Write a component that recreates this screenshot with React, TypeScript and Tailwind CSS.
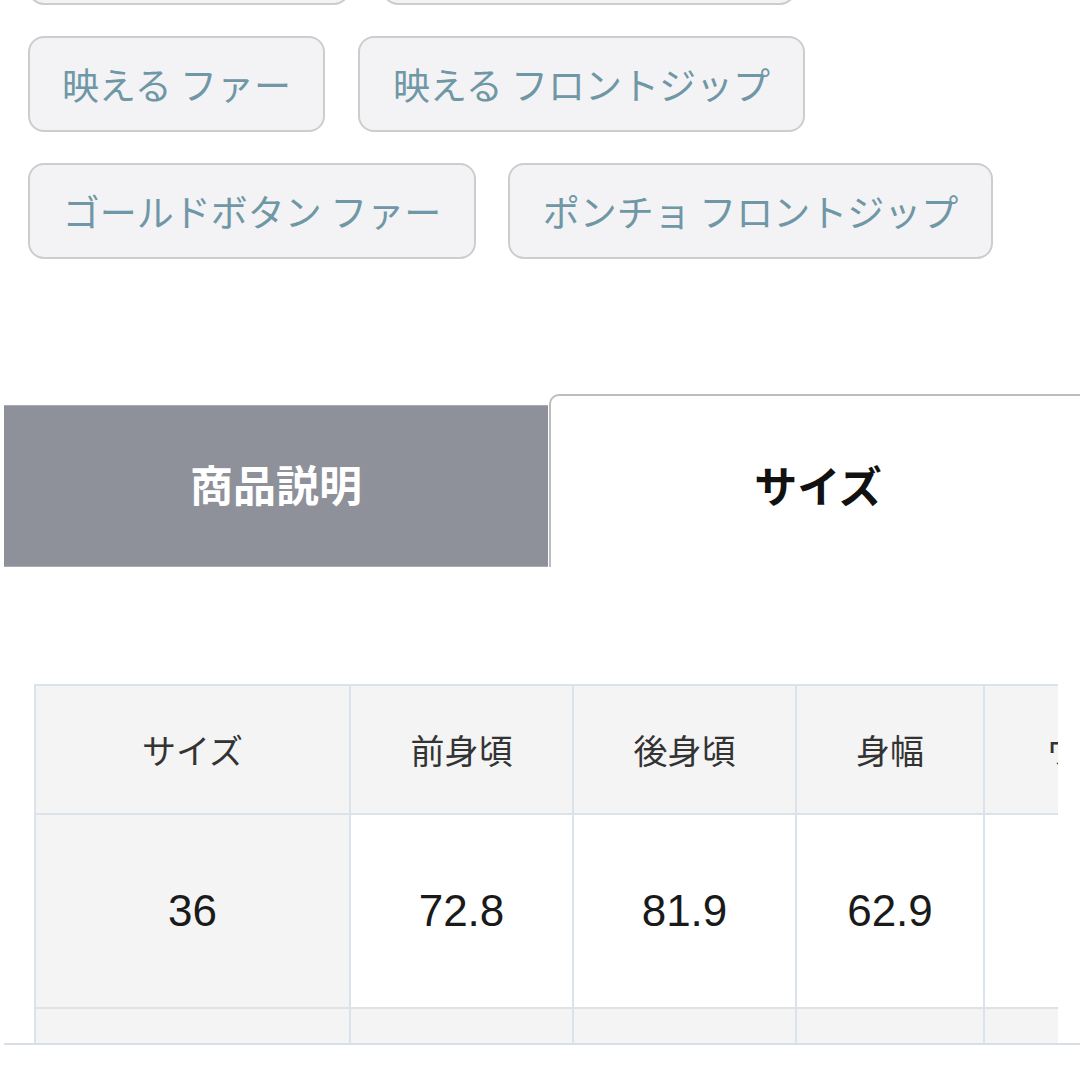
import React from "react";

const jp = { fontFamily: '"Noto Sans CJK JP", "Noto Sans", sans-serif' } as React.CSSProperties;

function Chip({ label, w }: { label?: string; w: string }) {
  return (
    <div
      className={`h-[96px] ${w} shrink-0 flex items-center justify-center rounded-[16px] border-2 border-[#cdcdcd] bg-[#f3f3f5] text-[37px] text-[#6f97a5] whitespace-nowrap leading-none`}
    >
      {label}
    </div>
  );
}

export default function App() {
  const head = ["サイズ", "前身頃", "後身頃", "身幅", "ウエスト"];
  const rows = [
    ["36", "72.8", "81.9", "62.9", "60.0"],
    ["38", "73.8", "82.9", "64.9", "62.0"],
  ];
  return (
    <div className="w-[1080px] h-[1080px] overflow-hidden bg-white" style={jp}>
      <div className="flex flex-col gap-[31px] pl-[28px] -mt-[91px]">
        <div className="flex gap-[32px]">
          <Chip w="w-[322px]" />
          <Chip w="w-[414px]" />
        </div>
        <div className="flex gap-[33px]">
          <Chip label="映える ファー" w="w-[297px]" />
          <Chip label="映える フロントジップ" w="w-[447px]" />
        </div>
        <div className="flex gap-[32px]">
          <Chip label="ゴールドボタン ファー" w="w-[448px]" />
          <Chip label="ポンチョ フロントジップ" w="w-[485px]" />
        </div>
      </div>

      <div className="mt-[135px] flex items-end pl-[4px]">
        <div className="w-[544px] h-[162px] shrink-0 pb-[6px] bg-[#8e909a] border-y border-[#a9abb2] flex items-center justify-center text-white text-[43px] font-bold leading-none">
          商品説明
        </div>
        <div className="ml-[1px] w-[536px] h-[173px] shrink-0 pt-[5px] bg-white border-t-2 border-l-2 border-[#bdbdbd] rounded-tl-[10px] flex items-center justify-center text-[#111] text-[43px] font-bold leading-none">
          サイズ
        </div>
      </div>

      <div className="mt-[117px] ml-[4px] border-b-2 border-[#d8dee6]">
        <div className="ml-[30px] w-[1024px] h-[359px] overflow-hidden">
          <table
            className="border-collapse table-fixed w-[1209px]"
            style={{ fontFamily: '"Liberation Sans", "Noto Sans CJK JP", sans-serif' }}
          >
            <colgroup>
              <col className="w-[315px]" />
              <col className="w-[223px]" />
              <col className="w-[223px]" />
              <col className="w-[188px]" />
              <col className="w-[260px]" />
            </colgroup>
            <thead>
              <tr className="h-[129px]">
                {head.map((h) => (
                  <th
                    key={h}
                    className="border-2 border-[#dbe2ea] bg-[#f4f4f4] text-[34px] font-normal text-[#333] text-center align-middle p-0"
                    style={jp}
                  >
                    {h}
                  </th>
                ))}
              </tr>
            </thead>
            <tbody>
              {rows.map((r, i) => (
                <tr key={i} className="h-[194px]">
                  {r.map((c, j) => (
                    <td
                      key={j}
                      className={`border-2 border-[#dbe2ea] text-[44px] text-[#1a1a1a] text-center align-middle p-0 ${
                        j === 0 || i % 2 === 1 ? "bg-[#f4f4f4]" : "bg-white"
                      }`}
                    >
                      {c}
                    </td>
                  ))}
                </tr>
              ))}
            </tbody>
          </table>
        </div>
      </div>
    </div>
  );
}
